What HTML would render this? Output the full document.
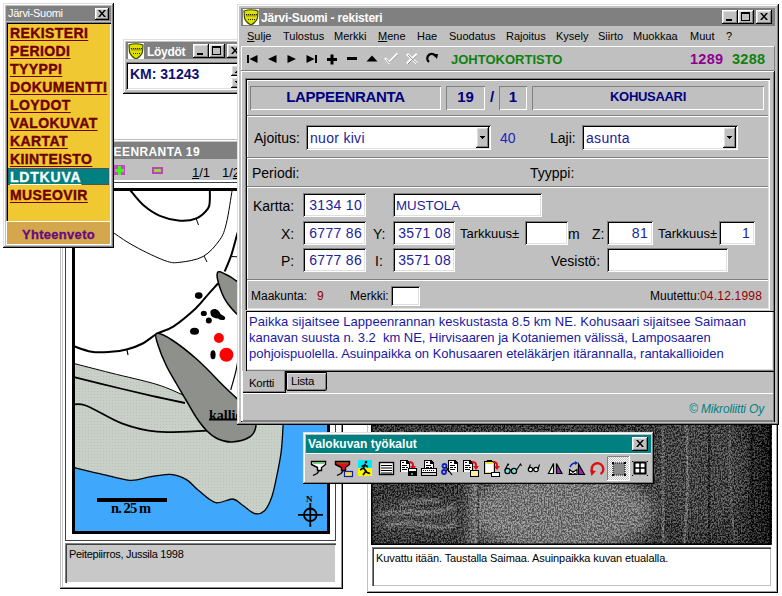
<!DOCTYPE html>
<html><head><meta charset="utf-8">
<style>
*{margin:0;padding:0;box-sizing:border-box}
html,body{width:782px;height:596px;overflow:hidden;background:#fff;font-family:"Liberation Sans",sans-serif;font-size:11px;color:#000}
.a{position:absolute}
.win{position:absolute;background:#c0c0c0;box-shadow:inset -1px -1px #000,inset 1px 1px #dfdfdf,inset -2px -2px #808080,inset 2px 2px #fff}
.tb{position:absolute;background:#808080;color:#fff;font-weight:bold;font-size:12px;white-space:nowrap;overflow:hidden}
.btn{position:absolute;background:#c0c0c0;box-shadow:inset -1px -1px #000,inset 1px 1px #fff,inset -2px -2px #808080,inset 2px 2px #dfdfdf}
.sunk{position:absolute;background:#fff;box-shadow:inset 1px 1px #808080,inset -1px -1px #fff,inset 2px 2px #000,inset -2px -2px #dfdfdf}
.sunk1{position:absolute;box-shadow:inset 1px 1px #808080,inset -1px -1px #fff}
.rais1{position:absolute;box-shadow:inset -1px -1px #808080,inset 1px 1px #fff}
.t{position:absolute;white-space:nowrap;line-height:1}
</style></head><body>

<!-- MAP WINDOW -->
<div class="a" style="left:60px;top:139px;width:283px;height:450px;background:#fff;box-shadow:inset -1px -1px #000,inset 1px 1px #c0c0c0,inset -2px -2px #909090,inset 2px 2px #fff,inset 3px 3px #c8c8c8"></div>
<div class="a" style="left:63px;top:159px;width:277px;height:21px;background:#c0c0c0"></div>
<div class="tb" style="left:63px;top:142px;width:277px;height:17px"></div>
<div class="t" style="left:80px;top:146px;color:#fff;font-weight:bold;font-size:12px;letter-spacing:0.4px">LAPPEENRANTA 19</div>
<svg class="a" style="left:114px;top:165px" width="12" height="11"><rect x="0" y="0" width="11" height="10" fill="#cc44cc"/><path d="M4 1h3v3h3v3h-3v3h-3v-3h-3v-3h3z" fill="#44ee22"/></svg>
<div class="a" style="left:152px;top:167px;width:11px;height:7px;background:#90e030;border:2px solid #c040c0"></div>
<div class="t" style="left:192px;top:166px;font-size:13px"><u>1</u>/1</div>
<div class="t" style="left:222px;top:166px;font-size:13px">1/<u>2</u></div>
<div class="a" style="left:65px;top:182px;width:271px;height:359px;background:#fff;border:1px solid #404040;box-shadow:inset 0 -1px #fff"></div>
<div class="a" style="left:65px;top:543px;width:271px;height:40px;background:#c8c8c8;box-shadow:inset 1px 1px #808080,inset 2px 2px #404040,inset -1px -1px #fff"></div>
<div class="t" style="left:69px;top:549px;font-size:11px;letter-spacing:-0.3px">Peitepiirros, Jussila 1998</div>
<svg class="a" style="left:72px;top:188px" width="258" height="346" viewBox="72 188 258 346">
 <defs>
  <pattern id="dots" width="3" height="3" patternUnits="userSpaceOnUse"><rect width="3" height="3" fill="#c8d0c8"/><rect x="1" y="1" width="1" height="1" fill="#b8c0b8"/></pattern>
 </defs>
 <rect x="72" y="188" width="258" height="346" fill="#fff"/>
 <path d="M72.0 363.0 C78.5 364.7 96.8 369.4 111.0 373.0 C125.2 376.6 145.0 380.8 157.0 384.5 C169.0 388.2 178.7 393.2 183.0 395.0 L237 400 L285 400 L284 400 L284.0 400.0 C283.9 404.1 283.6 416.3 283.1 424.9 C282.6 433.5 282.3 442.7 281.2 451.6 C280.1 460.5 277.9 470.6 276.3 478.3 C274.7 486.0 273.5 492.2 271.5 497.7 C269.5 503.1 267.0 508.4 264.2 511.0 C261.4 513.6 258.1 514.5 254.5 513.5 C250.8 512.5 246.0 507.4 242.3 505.0 C238.7 502.6 237.1 499.4 232.6 499.0 C228.1 498.6 221.3 504.0 215.6 502.6 C209.9 501.2 203.5 494.4 198.6 490.5 C193.7 486.6 190.8 482.1 186.0 479.4 C181.2 476.7 176.0 474.8 170.0 474.4 C164.0 474.0 156.7 475.9 150.0 476.9 C143.3 477.9 138.2 480.9 129.8 480.3 C121.4 479.8 109.2 475.8 99.6 473.6 C90.0 471.4 76.6 468.1 72.0 467.0 Z" fill="url(#dots)"/>
 <path d="M72.0 467.0 C76.6 468.1 90.0 471.4 99.6 473.6 C109.2 475.8 121.4 479.8 129.8 480.3 C138.2 480.9 143.3 477.9 150.0 476.9 C156.7 475.9 164.0 474.0 170.0 474.4 C176.0 474.8 181.2 476.7 186.0 479.4 C190.8 482.1 193.7 486.6 198.6 490.5 C203.5 494.4 209.9 501.2 215.6 502.6 C221.3 504.0 228.1 498.6 232.6 499.0 C237.1 499.4 238.7 502.6 242.3 505.0 C246.0 507.4 250.8 512.5 254.5 513.5 C258.1 514.5 261.4 513.6 264.2 511.0 C267.0 508.4 269.5 503.1 271.5 497.7 C273.5 492.2 274.7 486.0 276.3 478.3 C277.9 470.6 280.1 460.5 281.2 451.6 C282.3 442.7 282.6 433.5 283.1 424.9 C283.6 416.3 283.9 404.1 284.0 400.0 L285 400 L330 400 L330 534 L72 534 Z" fill="#40a8fc"/>
 <path d="M72.0 467.0 C76.6 468.1 90.0 471.4 99.6 473.6 C109.2 475.8 121.4 479.8 129.8 480.3 C138.2 480.9 143.3 477.9 150.0 476.9 C156.7 475.9 164.0 474.0 170.0 474.4 C176.0 474.8 181.2 476.7 186.0 479.4 C190.8 482.1 193.7 486.6 198.6 490.5 C203.5 494.4 209.9 501.2 215.6 502.6 C221.3 504.0 228.1 498.6 232.6 499.0 C237.1 499.4 238.7 502.6 242.3 505.0 C246.0 507.4 250.8 512.5 254.5 513.5 C258.1 514.5 261.4 513.6 264.2 511.0 C267.0 508.4 269.5 503.1 271.5 497.7 C273.5 492.2 274.7 486.0 276.3 478.3 C277.9 470.6 280.1 460.5 281.2 451.6 C282.3 442.7 282.6 433.5 283.1 424.9 C283.6 416.3 283.9 404.1 284.0 400.0" fill="none" stroke="#000" stroke-width="1.3"/>
 <path d="M72.0 363.0 C78.5 364.7 96.8 369.4 111.0 373.0 C125.2 376.6 145.0 380.8 157.0 384.5 C169.0 388.2 178.7 393.2 183.0 395.0" fill="none" stroke="#000" stroke-width="1"/>
 <path d="M72.0 376.5 C80.4 378.6 108.3 385.6 122.5 389.0 C136.7 392.4 146.6 394.7 157.0 397.0 C167.4 399.3 180.3 402.0 185.0 403.0" fill="none" stroke="#000" stroke-width="1.8"/>
 <path d="M70.0 405.0 C72.6 405.1 77.0 402.4 85.7 405.5 C94.5 408.6 110.6 419.3 122.5 423.7 C134.4 428.1 142.9 430.5 157.0 431.7 C171.1 432.9 198.7 430.8 207.0 430.6" fill="none" stroke="#000" stroke-width="1.8"/>
 <path d="M130.0 190.0 C132.2 192.5 138.2 200.7 143.2 205.0 C148.2 209.3 153.8 213.2 159.9 215.8 C166.0 218.4 173.7 220.3 179.8 220.7 C185.9 221.1 191.7 220.4 196.4 218.3 C201.1 216.2 205.9 211.4 208.1 208.3 C210.3 205.2 209.5 203.1 209.8 200.0 C210.1 196.9 209.8 191.7 209.8 190.0" fill="none" stroke="#000" stroke-width="2"/>
 <path d="M196 218 L198.5 225" stroke="#000" stroke-width="1"/>
 <path d="M100.0 222.0 C102.4 223.9 108.4 229.1 114.2 233.2 C120.0 237.3 126.5 241.9 135.0 246.5 C143.4 251.1 157.4 258.0 164.9 260.6 C172.4 263.2 173.4 263.0 179.8 262.3 C186.2 261.6 196.4 260.2 203.1 256.5 C209.8 252.8 215.8 245.5 219.7 239.9 C223.6 234.3 224.3 231.5 226.4 223.2 C228.5 214.9 231.2 195.5 232.2 190.0" fill="none" stroke="#000" stroke-width="1"/>
 <path d="M204 256 L207 262" stroke="#000" stroke-width="1"/>
 <path d="M240.0 226.0 C239.5 227.5 238.4 230.1 237.0 234.9 C235.6 239.7 233.5 248.7 231.4 254.8 C229.3 260.9 225.8 268.7 224.7 271.5" fill="none" stroke="#000" stroke-width="2"/>
 <path d="M232 256.5 L240 257" stroke="#000" stroke-width="1"/>
 <path d="M72.0 345.5 C75.3 346.6 85.1 350.8 91.6 351.8 C98.1 352.9 104.8 352.2 110.8 351.8 C116.8 351.4 122.1 350.6 127.4 349.2 C132.7 347.8 137.8 346.1 142.7 343.5 C147.6 340.9 151.7 336.8 156.8 333.9 C162.0 331.0 167.2 330.5 173.6 326.3 C180.0 322.1 189.5 314.1 195.4 308.7 C201.3 303.2 205.0 297.8 208.8 293.6 C212.6 289.4 216.5 285.2 218.0 283.5" fill="none" stroke="#000" stroke-width="2"/>
 <path d="M127 350 L128 355" stroke="#000" stroke-width="1.2"/>
 <path d="M217.5 272.5 C218.5 270.2 223.1 273.2 226.0 274.5 C228.9 275.8 232.3 277.8 235.0 280.0 C237.7 282.2 240.8 282.0 242.0 288.0 C243.2 294.0 244.3 313.3 242.0 316.0 C239.7 318.7 231.7 308.7 228.0 304.0 C224.3 299.3 221.8 293.2 220.0 288.0 C218.2 282.8 216.5 274.8 217.5 272.5 Z" fill="#8e908c" stroke="#000" stroke-width="1.5"/>
 <path d="M230.7 390.0 C231.7 386.4 234.8 376.7 236.5 368.4 C238.2 360.1 240.2 344.7 241.0 340.0" fill="none" stroke="#000" stroke-width="1.2"/>
 <path d="M156.5 333.5 C154.2 334.3 156.4 339.8 158.0 345.0 C159.6 350.2 163.0 358.7 166.0 365.0 C169.0 371.3 172.7 377.2 176.0 383.0 C179.3 388.8 182.7 394.3 186.0 400.0 C189.3 405.7 192.5 411.8 196.0 417.0 C199.5 422.2 203.3 427.3 207.0 431.0 C210.7 434.7 213.8 437.2 218.0 439.0 C222.2 440.8 226.7 442.3 232.0 442.0 C237.3 441.7 245.7 439.4 249.6 437.0 C253.5 434.6 255.0 431.0 255.7 427.3 C256.4 423.6 257.1 419.8 254.0 415.0 C250.9 410.2 241.9 403.3 237.0 398.6 C232.1 393.9 231.3 393.5 224.7 387.0 C218.1 380.5 206.2 367.6 197.4 359.8 C188.6 352.0 178.8 344.4 172.0 340.0 C165.2 335.6 158.8 332.7 156.5 333.5 Z" fill="#8e908c" stroke="#000" stroke-width="1.5"/>
 <g fill="#000">
  <ellipse cx="198.7" cy="295.6" rx="3.8" ry="3.3"/>
  <ellipse cx="203.8" cy="313.4" rx="3" ry="2.6"/>
  <path d="M210.5 311 Q212 308.5 215.5 309 Q219 310 220.5 314 L224.5 316.5 Q226 318.5 224 320 Q220 320.5 218 318.5 Q213 318 211 315.5 Q210 313 210.5 311 Z"/>
  <ellipse cx="208.8" cy="320.4" rx="3" ry="3"/>
  <ellipse cx="194.5" cy="331.3" rx="4.5" ry="3.5"/>
  <ellipse cx="213" cy="354.8" rx="2.6" ry="4.5"/>
 </g>
 <circle cx="218.9" cy="338" r="5" fill="#f00"/>
 <circle cx="226.4" cy="354.8" r="7" fill="#f00"/>
 <text x="209" y="419.5" font-family="Liberation Serif" font-weight="bold" font-size="14" fill="#000">kallio</text><rect x="209" y="418.5" width="30" height="2" fill="#000"/>
 <rect x="97" y="498" width="70" height="4" fill="#000"/>
 <text x="111" y="513.5" font-family="Liberation Serif" font-weight="bold" font-size="14.5" fill="#000" letter-spacing="-0.9" transform="translate(111 513.5) scale(1 1.05) translate(-111 -513.5)">n. 25 m</text>
 <circle cx="310.3" cy="514.8" r="6.3" fill="none" stroke="#000" stroke-width="1.8"/>
 <path d="M298 514.8 H323 M310.3 503 V527" stroke="#000" stroke-width="1.8"/>
 <text x="306" y="502" font-family="Liberation Serif" font-weight="bold" font-size="9" fill="#000">N</text>
 <rect x="73.5" y="189.5" width="255" height="343" fill="none" stroke="#000" stroke-width="3"/>
</svg>

<!-- PHOTO WINDOW -->
<div class="a" style="left:367px;top:380px;width:411px;height:213px;background:#fff;box-shadow:inset -1px -1px #000,inset 1px 1px #c0c0c0,inset -2px -2px #a0a0a0"></div>
<svg class="a" style="left:371px;top:400px" width="401" height="145" viewBox="371 400 401 145">
 <defs>
  <filter id="nz" x="0" y="0" width="100%" height="100%" color-interpolation-filters="sRGB">
   <feTurbulence type="fractalNoise" baseFrequency="0.7 0.55" numOctaves="3" seed="11" result="n"/>
   <feColorMatrix in="n" type="matrix" values="3.2 0 0 0 -1.1  3.2 0 0 0 -1.1  3.2 0 0 0 -1.1  0 0 0 0 1" result="g"/>
   <feComposite in="SourceGraphic" in2="g" operator="arithmetic" k1="0" k2="1" k3="0.34" k4="-0.17"/>
  </filter>
  <filter id="bl" x="-50%" y="-50%" width="200%" height="200%"><feGaussianBlur stdDeviation="8"/></filter>
  <filter id="bl2" x="-50%" y="-50%" width="200%" height="200%"><feGaussianBlur stdDeviation="1.5"/></filter>
  <linearGradient id="pg" x1="371" x2="771" y1="0" y2="0" gradientUnits="userSpaceOnUse">
   <stop offset="0" stop-color="#383838"/><stop offset="0.7" stop-color="#3a3a3a"/><stop offset="0.93" stop-color="#323232"/><stop offset="1" stop-color="#141414"/>
  </linearGradient>
  <linearGradient id="trk" x1="0" x2="1" y1="0" y2="0"><stop offset="0" stop-color="#3a3a3a"/><stop offset="0.5" stop-color="#555"/><stop offset="0.85" stop-color="#7a7a7a"/><stop offset="1" stop-color="#444"/></linearGradient>
 </defs>
 <g filter="url(#nz)">
  <rect x="371" y="400" width="401" height="145" fill="url(#pg)"/>
  <g filter="url(#bl)">
   <ellipse cx="560" cy="512" rx="95" ry="42" fill="#787878"/>
   <ellipse cx="420" cy="518" rx="50" ry="14" fill="#505050"/>
   <ellipse cx="700" cy="470" rx="45" ry="60" fill="#454545"/>
  </g>
  <g filter="url(#bl2)" stroke="#8a8a8a" stroke-width="3" fill="none" opacity="0.8">
   <path d="M380 515 Q400 510 420 512 T455 505"/>
   <path d="M385 525 Q410 522 430 526 T456 522"/>
   <path d="M400 505 Q420 498 440 502"/>
   <path d="M490 530 Q510 520 530 525"/>
  </g>
  <g stroke-width="1.5" fill="none">
   <path d="M663 424 V545" stroke="#6a6a6a" opacity="0.8" stroke-width="2.5"/>
   <path d="M686 424 Q690 480 684 545" stroke="#707070" opacity="0.8" stroke-width="2.5"/>
   <path d="M709 424 V545" stroke="#151515" opacity="0.8"/>
   <path d="M730 424 Q728 480 735 545" stroke="#606060" opacity="0.8" stroke-width="2"/>
   <path d="M752 424 V545" stroke="#151515" opacity="0.8" stroke-width="3"/>
  </g>
  <rect x="457" y="470" width="22" height="75" fill="url(#trk)" opacity="0.9"/>
 </g>
 <rect x="371.75" y="400" width="398.5" height="144.25" fill="none" stroke="#000" stroke-width="1.5"/>
</svg>
<div class="a" style="left:372px;top:547px;width:399px;height:39px;background:#fff;box-shadow:inset 1px 1px #808080,inset 2px 2px #404040,inset -1px -1px #c0c0c0"></div>
<div class="t" style="left:376px;top:553px;font-size:11px;letter-spacing:-0.1px">Kuvattu itään. Taustalla Saimaa. Asuinpaikka kuvan etualalla.</div>

<!-- LOYDOT WINDOW -->
<div class="win" style="left:123px;top:39px;width:130px;height:55px"></div>
<div class="tb" style="left:126px;top:42px;width:124px;height:17px"></div>
<svg class="a" style="left:128px;top:43px" width="16" height="16" viewBox="0 0 16 16"><rect width="16" height="16" fill="#fff"/><path d="M1 2 Q8 -0.5 15 2 L14.5 9 Q13 13.5 8 16 Q3 13.5 1.5 9 Z" fill="#e0e000" stroke="#3a4a00" stroke-width="1.2"/><g fill="#202000"><rect x="3" y="5" width="1.2" height="1.2"/><rect x="5" y="5" width="1.2" height="1.2"/><rect x="7" y="5" width="1.2" height="1.2"/><rect x="9" y="5" width="1.2" height="1.2"/><rect x="11" y="5" width="1.2" height="1.2"/><rect x="13" y="5" width="1" height="1.2"/><rect x="3" y="6.5" width="10.5" height="0.8" fill="#707000"/><rect x="5" y="10" width="1" height="1"/><rect x="7" y="10" width="1" height="1"/><rect x="9" y="10" width="1" height="1"/><rect x="11" y="10" width="1" height="1"/></g></svg>
<div class="t" style="left:147px;top:46px;color:#fff;font-weight:bold;font-size:12px;letter-spacing:-0.3px">Löydöt</div>
<div class="btn" style="left:193px;top:44px;width:16px;height:14px"><div class="a" style="left:4px;top:9px;width:6px;height:2px;background:#000"></div></div>
<div class="btn" style="left:209px;top:44px;width:16px;height:14px"><div class="a" style="left:3px;top:2px;width:9px;height:9px;border:1px solid #000;border-top-width:2px"></div></div>
<div class="btn" style="left:227px;top:44px;width:16px;height:14px"><svg class="a" style="left:4px;top:3px" width="8" height="7"><path d="M0 0h2l2 2.5 2-2.5h2l-3 3.5 3 3.5h-2l-2-2.5-2 2.5h-2l3-3.5z" fill="#000"/></svg></div>
<div class="sunk" style="left:126px;top:62px;width:124px;height:28px"></div>
<div class="btn" style="left:231px;top:65px;width:16px;height:11px"><svg class="a" style="left:4px;top:4px" width="7" height="4" shape-rendering="crispEdges"><path d="M3 0h1v1h1v1h1v1h1v1h-7v-1h1v-1h1v-1h1z" fill="#000"/></svg></div>
<div class="btn" style="left:231px;top:77px;width:16px;height:11px"><svg class="a" style="left:4px;top:4px" width="7" height="4" shape-rendering="crispEdges"><path d="M0 0h7v1h-1v1h-1v1h-1v1h-1v-1h-1v-1h-1v-1h-1z" fill="#000"/></svg></div>
<div class="t" style="left:130px;top:67px;font-weight:bold;font-size:14px;color:#101070">KM: 31243</div>

<!-- MAIN WINDOW -->
<div class="win" style="left:237px;top:4px;width:542px;height:421px"></div>
<div class="tb" style="left:241px;top:8px;width:534px;height:18px"></div>
<svg class="a" style="left:243px;top:9px" width="16" height="16" viewBox="0 0 16 16"><rect width="16" height="16" fill="#fff"/><path d="M1 2 Q8 -0.5 15 2 L14.5 9 Q13 13.5 8 16 Q3 13.5 1.5 9 Z" fill="#e0e000" stroke="#3a4a00" stroke-width="1.2"/><g fill="#202000"><rect x="3" y="5" width="1.2" height="1.2"/><rect x="5" y="5" width="1.2" height="1.2"/><rect x="7" y="5" width="1.2" height="1.2"/><rect x="9" y="5" width="1.2" height="1.2"/><rect x="11" y="5" width="1.2" height="1.2"/><rect x="13" y="5" width="1" height="1.2"/><rect x="3" y="6.5" width="10.5" height="0.8" fill="#707000"/><rect x="5" y="10" width="1" height="1"/><rect x="7" y="10" width="1" height="1"/><rect x="9" y="10" width="1" height="1"/><rect x="11" y="10" width="1" height="1"/></g></svg>
<div class="t" style="left:261px;top:12px;color:#fff;font-weight:bold;font-size:12px;letter-spacing:-0.2px">Järvi-Suomi - rekisteri</div>
<div class="btn" style="left:722px;top:10px;width:16px;height:14px"><div class="a" style="left:4px;top:9px;width:6px;height:2px;background:#000"></div></div>
<div class="btn" style="left:738px;top:10px;width:16px;height:14px"><div class="a" style="left:3px;top:2px;width:9px;height:9px;border:1px solid #000;border-top-width:2px"></div></div>
<div class="btn" style="left:756px;top:10px;width:16px;height:14px"><svg class="a" style="left:4px;top:3px" width="8" height="7"><path d="M0 0h2l2 2.5 2-2.5h2l-3 3.5 3 3.5h-2l-2-2.5-2 2.5h-2l3-3.5z" fill="#000"/></svg></div>
<!-- menu -->
<div class="t" style="top:31px;left:247px;font-size:11px"><u>S</u>ulje</div>
<div class="t" style="top:31px;left:283px;font-size:11px">Tulostus</div>
<div class="t" style="top:31px;left:334px;font-size:11px">Merkki</div>
<div class="t" style="top:31px;left:378px;font-size:11px"><u>M</u>ene</div>
<div class="t" style="top:31px;left:417px;font-size:11px">Hae</div>
<div class="t" style="top:31px;left:449px;font-size:11px">Suodatus</div>
<div class="t" style="top:31px;left:506px;font-size:11px">Rajoitus</div>
<div class="t" style="top:31px;left:556px;font-size:11px">Kysely</div>
<div class="t" style="top:31px;left:598px;font-size:11px">Siirto</div>
<div class="t" style="top:31px;left:633px;font-size:11px">Muokkaa</div>
<div class="t" style="top:31px;left:690px;font-size:11px">Muut</div>
<div class="t" style="top:31px;left:726px;font-size:11px">?</div>
<!-- toolbar -->
<div class="rais1" style="left:241px;top:46px;width:534px;height:25px"></div>
<svg class="a" style="left:241px;top:46px" width="220" height="25" viewBox="241 46 220 25">
 <rect x="247" y="55" width="2" height="8" fill="#000"/><path d="M249.5 59 L257.5 55 V63 Z" fill="#000"/>
 <path d="M268 59 L276.5 55 V63 Z" fill="#000"/>
 <path d="M287.5 55 L296 59 L287.5 63 Z" fill="#000"/>
 <path d="M306.5 55 L314.5 59 L306.5 63 Z" fill="#000"/><rect x="315" y="55" width="2" height="8" fill="#000"/>
 <path d="M330.5 54.5h3v3.5h3.5v3h-3.5v3.5h-3v-3.5h-3.5v-3h3.5z" fill="#000"/>
 <rect x="347" y="57" width="10" height="3" fill="#000"/>
 <path d="M366.5 61.5 L372 55.5 L377.5 61.5 Z" fill="#000"/>
 <path d="M385 58 L389 62.5 L397.5 53.5" stroke="#fff" stroke-width="2.4" fill="none"/><path d="M386.5 59.5 L389.5 63 L398 54.5" stroke="#8a8a8a" stroke-width="1" fill="none"/>
 <path d="M407 54 L417 63.5 M417 54 L407 63.5" stroke="#fff" stroke-width="2.6" fill="none"/><path d="M408 55 L417.5 64 M417.5 55 L408 64" stroke="#8a8a8a" stroke-width="1" fill="none"/>
 <path d="M429 62 A4.5 4.5 0 1 1 436 57" stroke="#000" stroke-width="2.2" fill="none"/><path d="M433 54 L438 54 L437 59 Z" fill="#000"/>
</svg>
<div class="t" style="left:451px;top:53px;font-weight:bold;font-size:13px;color:#108010">JOHTOKORTISTO</div>
<div class="t" style="left:690px;top:52px;font-weight:bold;font-size:14.5px;color:#900090;letter-spacing:0.3px">1289</div>
<div class="t" style="left:732px;top:52px;font-weight:bold;font-size:14.5px;color:#108010;letter-spacing:0.3px">3288</div>
<!-- lower panel -->
<div class="a" style="left:241px;top:71px;width:534px;height:351px;box-shadow:inset -1px -1px #000,inset 1px 1px #fff,inset -2px -2px #808080"></div>
<!-- content frame -->
<div class="a" style="left:245px;top:78px;width:525px;height:232px;box-shadow:inset 1px 1px #808080,inset 2px 2px #000,inset 3px 3px #fff,inset -1px -1px #fff,inset -2px -2px #dfdfdf"></div>
<!-- separators -->
<div class="a" style="left:247px;top:115px;width:521px;height:1px;background:#808080;box-shadow:0 1px #fff"></div>
<div class="a" style="left:247px;top:157px;width:521px;height:1px;background:#808080;box-shadow:0 1px #fff"></div>
<div class="a" style="left:247px;top:186px;width:521px;height:1px;background:#808080;box-shadow:0 1px #fff"></div>
<div class="a" style="left:247px;top:279px;width:521px;height:1px;background:#808080;box-shadow:0 1px #fff"></div>
<!-- header boxes -->
<div class="sunk1" style="left:250px;top:86px;width:191px;height:24px"></div>
<div class="t" style="left:250px;width:191px;text-align:center;top:89px;font-weight:bold;font-size:15px;color:#000080;letter-spacing:-0.3px">LAPPEENRANTA</div>
<div class="sunk1" style="left:446px;top:86px;width:39px;height:24px"></div>
<div class="t" style="left:446px;width:39px;text-align:center;top:89px;font-weight:bold;font-size:15px;color:#000080">19</div>
<div class="t" style="left:490px;top:89px;font-weight:bold;font-size:15px;color:#000080">/</div>
<div class="sunk1" style="left:499px;top:86px;width:28px;height:24px"></div>
<div class="t" style="left:499px;width:28px;text-align:center;top:89px;font-weight:bold;font-size:15px;color:#000080">1</div>
<div class="sunk1" style="left:532px;top:86px;width:232px;height:24px"></div>
<div class="t" style="left:532px;width:232px;text-align:center;top:90px;font-weight:bold;font-size:13px;color:#000080;letter-spacing:-0.3px">KOHUSAARI</div>
<!-- Ajoitus row -->
<div class="t" style="left:254px;top:131px;font-size:14px">Ajoitus:</div>
<div class="sunk" style="left:306px;top:125px;width:185px;height:25px"></div>
<div class="t" style="left:310px;top:131px;font-size:14px;color:#22229a;letter-spacing:0.3px">nuor kivi</div>
<div class="btn" style="left:476px;top:127px;width:13px;height:21px"><svg class="a" style="left:4px;top:9px" width="5" height="3" shape-rendering="crispEdges"><path d="M0 0h5v1h-1v1h-1v1h-1v-1h-1v-1h-1z" fill="#000"/></svg></div>
<div class="t" style="left:500px;top:131px;font-size:14px;color:#2020c0">40</div>
<div class="t" style="left:550px;top:131px;font-size:14px">Laji:</div>
<div class="sunk" style="left:582px;top:125px;width:156px;height:25px"></div>
<div class="t" style="left:586px;top:131px;font-size:14px;color:#22229a;letter-spacing:0.3px">asunta</div>
<div class="btn" style="left:723px;top:127px;width:13px;height:21px"><svg class="a" style="left:4px;top:9px" width="5" height="3" shape-rendering="crispEdges"><path d="M0 0h5v1h-1v1h-1v1h-1v-1h-1v-1h-1z" fill="#000"/></svg></div>
<!-- Periodi row -->
<div class="t" style="left:252px;top:166px;font-size:14px">Periodi:</div>
<div class="t" style="left:530px;top:166px;font-size:14px">Tyyppi:</div>
<!-- Kartta block -->
<div class="t" style="left:253px;top:199px;font-size:14px">Kartta:</div>
<div class="sunk" style="left:303px;top:193px;width:63px;height:24px"></div>
<div class="t" style="left:303px;width:59px;text-align:right;top:198px;font-size:14px;color:#22229a;letter-spacing:0.3px">3134 10</div>
<div class="sunk" style="left:393px;top:193px;width:149px;height:24px"></div>
<div class="t" style="left:396px;top:199px;font-size:13.3px;color:#22229a;letter-spacing:0px">MUSTOLA</div>
<div class="t" style="left:281px;top:227px;font-size:14px">X:</div>
<div class="sunk" style="left:303px;top:221px;width:63px;height:24px"></div>
<div class="t" style="left:303px;width:59px;text-align:right;top:226px;font-size:14px;color:#22229a;letter-spacing:0.3px">6777 86</div>
<div class="t" style="left:373px;top:227px;font-size:14px">Y:</div>
<div class="sunk" style="left:393px;top:221px;width:62px;height:24px"></div>
<div class="t" style="left:393px;width:58px;text-align:right;top:226px;font-size:14px;color:#22229a;letter-spacing:0.3px">3571 08</div>
<div class="t" style="left:460px;top:227px;font-size:13px">Tarkkuus±</div>
<div class="sunk" style="left:525px;top:221px;width:43px;height:24px"></div>
<div class="t" style="left:568px;top:227px;font-size:14px">m</div>
<div class="t" style="left:592px;top:227px;font-size:14px">Z:</div>
<div class="sunk" style="left:607px;top:221px;width:46px;height:24px"></div>
<div class="t" style="left:607px;width:41px;text-align:right;top:226px;font-size:14px;color:#22229a;letter-spacing:0.3px">81</div>
<div class="t" style="left:658px;top:227px;font-size:13px">Tarkkuus±</div>
<div class="sunk" style="left:719px;top:221px;width:36px;height:24px"></div>
<div class="t" style="left:719px;width:31px;text-align:right;top:226px;font-size:14px;color:#22229a;letter-spacing:0.3px">1</div>
<div class="t" style="left:281px;top:254px;font-size:14px">P:</div>
<div class="sunk" style="left:303px;top:248px;width:63px;height:24px"></div>
<div class="t" style="left:303px;width:59px;text-align:right;top:253px;font-size:14px;color:#22229a;letter-spacing:0.3px">6777 86</div>
<div class="t" style="left:375px;top:254px;font-size:14px">I:</div>
<div class="sunk" style="left:393px;top:248px;width:62px;height:24px"></div>
<div class="t" style="left:393px;width:58px;text-align:right;top:253px;font-size:14px;color:#22229a;letter-spacing:0.3px">3571 08</div>
<div class="t" style="left:551px;top:254px;font-size:14px">Vesistö:</div>
<div class="sunk" style="left:607px;top:248px;width:121px;height:24px"></div>
<!-- Maakunta row -->
<div class="t" style="left:251px;top:290px;font-size:12px">Maakunta:</div>
<div class="t" style="left:317px;top:290px;font-size:12px;color:#900000">9</div>
<div class="t" style="left:350px;top:290px;font-size:12px">Merkki:</div>
<div class="sunk" style="left:391px;top:286px;width:29px;height:20px"></div>
<div class="t" style="left:650px;top:290px;font-size:12px">Muutettu:</div>
<div class="t" style="left:700px;top:290px;font-size:12px;color:#900000;letter-spacing:0.2px">04.12.1998</div>
<!-- text box -->
<div class="a" style="left:246px;top:311px;width:529px;height:61px;background:#fff;box-shadow:inset 1px 1px #000,inset -1px -1px #000,inset -2px -2px #808080,inset -3px -3px #dfdfdf"></div>
<div class="t" style="left:249px;top:314px;font-size:13px;line-height:16px;color:#1818a4;letter-spacing:0.06px">Paikka sijaitsee Lappeenrannan keskustasta 8.5 km NE. Kohusaari sijaitsee Saimaan</div>
<div class="t" style="left:249px;top:330px;font-size:13px;line-height:16px;color:#1818a4;letter-spacing:-0.02px">kanavan suusta n. 3.2&nbsp; km NE, Hirvisaaren ja Kotaniemen välissä, Lamposaaren</div>
<div class="t" style="left:249px;top:346px;font-size:13px;line-height:16px;color:#1818a4;letter-spacing:-0.02px">pohjoispuolella. Asuinpaikka on Kohusaaren eteläkärjen itärannalla, rantakallioiden</div>
<!-- tabs -->
<div class="a" style="left:242px;top:371px;width:44px;height:22px;background:#c0c0c0;box-shadow:inset 1px 0 #fff,inset -1px -1px #000,inset -2px -2px #808080"></div>
<div class="t" style="left:249px;top:378px;font-size:11.5px;letter-spacing:-0.3px">Kortti</div>
<div class="a" style="left:286px;top:372px;width:41px;height:19px;background:#c0c0c0;border:1px solid #000;border-radius:0 0 2px 2px;box-shadow:inset 1px 1px #dfdfdf,inset -1px -1px #808080"></div>
<div class="t" style="left:291px;top:376px;font-size:11.5px;letter-spacing:-0.2px">Lista</div>
<!-- status -->
<div class="rais1" style="left:242px;top:393px;width:532px;height:29px"></div>
<div class="t" style="left:689px;top:403px;font-size:12px;font-style:italic;color:#008080;letter-spacing:-0.15px">© Mikroliitti Oy</div>

<!-- PALETTE -->
<div class="win" style="left:3px;top:3px;width:111px;height:245px"></div>
<div class="tb" style="left:6px;top:6px;width:105px;height:15px"></div>
<div class="t" style="left:8px;top:8px;color:#fff;font-size:11px;letter-spacing:-0.3px">Järvi-Suomi</div>
<div class="btn" style="left:95px;top:8px;width:14px;height:12px"><svg class="a" style="left:3px;top:2px" width="8" height="7"><path d="M0 0h2l2 2.5 2-2.5h2l-3 3.5 3 3.5h-2l-2-2.5-2 2.5h-2l3-3.5z" fill="#000"/></svg></div>
<div class="a" style="left:6px;top:22px;width:105px;height:200px;background:#f0c832;box-shadow:inset 1px 1px #808080,inset 2px 2px #000,inset -1px -1px #fff"></div>
<div class="a" style="left:8px;top:168px;width:101px;height:17px;background:#008080;outline:1px dotted #4a4a4a;outline-offset:-1px"></div>
<div class="t" style="left:10px;top:26px;font-weight:bold;font-size:14px;letter-spacing:0.4px;color:#700000;-webkit-text-stroke:0.4px #700000;text-decoration:underline;text-decoration-thickness:1px;text-underline-offset:2px">REKISTERI</div>
<div class="t" style="left:10px;top:44px;font-weight:bold;font-size:14px;letter-spacing:0.4px;color:#700000;-webkit-text-stroke:0.4px #700000;text-decoration:underline;text-decoration-thickness:1px;text-underline-offset:2px">PERIODI</div>
<div class="t" style="left:10px;top:62px;font-weight:bold;font-size:14px;letter-spacing:0.4px;color:#700000;-webkit-text-stroke:0.4px #700000;text-decoration:underline;text-decoration-thickness:1px;text-underline-offset:2px">TYYPPI</div>
<div class="t" style="left:10px;top:80px;font-weight:bold;font-size:14px;letter-spacing:0.4px;color:#700000;-webkit-text-stroke:0.4px #700000;text-decoration:underline;text-decoration-thickness:1px;text-underline-offset:2px">DOKUMENTTI</div>
<div class="t" style="left:10px;top:98px;font-weight:bold;font-size:14px;letter-spacing:0.4px;color:#700000;-webkit-text-stroke:0.4px #700000;text-decoration:underline;text-decoration-thickness:1px;text-underline-offset:2px">LOYDOT</div>
<div class="t" style="left:10px;top:116px;font-weight:bold;font-size:14px;letter-spacing:0.4px;color:#700000;-webkit-text-stroke:0.4px #700000;text-decoration:underline;text-decoration-thickness:1px;text-underline-offset:2px">VALOKUVAT</div>
<div class="t" style="left:10px;top:134px;font-weight:bold;font-size:14px;letter-spacing:0.4px;color:#700000;-webkit-text-stroke:0.4px #700000;text-decoration:underline;text-decoration-thickness:1px;text-underline-offset:2px">KARTAT</div>
<div class="t" style="left:10px;top:152px;font-weight:bold;font-size:14px;letter-spacing:0.4px;color:#700000;-webkit-text-stroke:0.4px #700000;text-decoration:underline;text-decoration-thickness:1px;text-underline-offset:2px">KIINTEISTO</div>
<div class="t" style="left:10px;top:170px;font-weight:bold;font-size:14px;letter-spacing:0.8px;color:#fff;-webkit-text-stroke:0.3px #fff;text-decoration:underline;text-decoration-thickness:1px;text-underline-offset:2px">LDTKUVA</div>
<div class="t" style="left:10px;top:188px;font-weight:bold;font-size:14px;letter-spacing:0.4px;color:#700000;-webkit-text-stroke:0.4px #700000;text-decoration:underline;text-decoration-thickness:1px;text-underline-offset:2px">MUSEOVIR</div>
<div class="a" style="left:6px;top:221px;width:105px;height:24px;background:#d4a64e;box-shadow:inset 1px 1px #fff,inset -1px -1px #fff"></div>
<div class="t" style="left:6px;width:105px;text-align:center;top:228px;font-weight:bold;font-size:13px;color:#6a0a7a;-webkit-text-stroke:0.3px #6a0a7a;letter-spacing:0.3px">Yhteenveto</div>

<!-- TOOLBAR -->
<div class="win" style="left:303px;top:432px;width:351px;height:52px"></div>
<div class="tb" style="left:306px;top:435px;width:345px;height:18px;background:#008080"></div>
<div class="a" style="left:306px;top:453px;width:345px;height:1px;background:#fff"></div>
<div class="t" style="left:308px;top:438px;color:#fff;font-weight:bold;font-size:12px">Valokuvan työkalut</div>
<div class="btn" style="left:632px;top:437px;width:16px;height:14px"><svg class="a" style="left:4px;top:3px" width="8" height="7"><path d="M0 0h2l2 2.5 2-2.5h2l-3 3.5 3 3.5h-2l-2-2.5-2 2.5h-2l3-3.5z" fill="#000"/></svg></div>
<svg class="a" style="left:303px;top:452px" width="351" height="32" viewBox="303 452 351 32">
 <defs><pattern id="chk" width="2" height="2" patternUnits="userSpaceOnUse"><rect width="2" height="2" fill="#fff"/><rect width="1" height="1" fill="#c0c0c0"/><rect x="1" y="1" width="1" height="1" fill="#c0c0c0"/></pattern></defs>
 <!-- 1 white funnel -->
 <path d="M311.5 461.5 H325.5 V464.5 L321.5 467.5 V470.5 H317.5 V467.5 L311.5 464.5 Z" fill="#fff" stroke="#000" stroke-width="1.4"/>
 <rect x="313" y="462.5" width="11" height="1.2" fill="#30c030"/>
 <path d="M319 471 L317 473.5 L313 475.5" fill="none" stroke="#000" stroke-width="1.3"/>
 <!-- 2 red funnel -->
 <path d="M335.5 461.5 H349.5 V464.5 L345.5 467.5 V470.5 H341.5 V467.5 L335.5 464.5 Z" fill="#e01010" stroke="#000" stroke-width="1.4"/>
 <rect x="337" y="462.5" width="11" height="1.2" fill="#707020"/>
 <path d="M343 471 L341 473.5 L337 475.5" fill="none" stroke="#000" stroke-width="1.3"/>
 <rect x="344.5" y="471.5" width="8" height="5" fill="#f0e060" stroke="#1020a0" stroke-width="1.2"/>
 <!-- 3 runner -->
 <rect x="358" y="460" width="14" height="8" fill="#00e8f8"/><rect x="358" y="468" width="14" height="8" fill="#f8f800"/>
 <circle cx="366" cy="462" r="1.3" fill="#000"/>
 <path d="M365.5 463.5 L363.5 468 L360 470 M363.5 468 L366 471 L363 475 M363.5 468 L367 472.5 L370 473.5 M365 465 L368 467 M365 465 L361.5 466.5" fill="none" stroke="#000" stroke-width="1.6"/>
 <!-- 4 lines -->
 <rect x="379.5" y="462.5" width="14" height="12" fill="#fff" stroke="#000" stroke-width="1.4"/>
 <path d="M381 465.5 H392 M381 468 H392 M381 470.5 H392 M381 473 H392" stroke="#000" stroke-width="1"/>
 <!-- 5 doc + arrow + floppy -->
 <g shape-rendering="crispEdges"><path d="M400 460 h7 l3 3 v9 h-10 z" fill="#000"/><path d="M401 461 h5 v3 h3 v8 h-8 z" fill="#fff"/>
 <rect x="402" y="462" width="2" height="1" fill="#000"/><rect x="402" y="465" width="5" height="1" fill="#000"/><rect x="402" y="467" width="3" height="1" fill="#000"/><rect x="406" y="467" width="2" height="1" fill="#000"/><rect x="402" y="469" width="5" height="1" fill="#000"/></g>
 <path d="M409 461 Q414 461 414 465 V466 H416 L413 470 L410 466 H412 V465 Q412 463 409 463 Z" fill="#e01010"/>
 <g shape-rendering="crispEdges"><rect x="408" y="468" width="9" height="8" fill="#000"/><rect x="409" y="469" width="7" height="2" fill="#fff"/><rect x="411" y="473" width="2" height="2" fill="#808080"/></g>
 <!-- 6 printer -->
 <g shape-rendering="crispEdges"><path d="M424 460 h7 l3 3 v9 h-10 z" fill="#000"/><path d="M425 461 h5 v3 h3 v8 h-8 z" fill="#fff"/>
 <rect x="426" y="462" width="2" height="1" fill="#000"/><rect x="426" y="465" width="5" height="1" fill="#000"/><rect x="426" y="467" width="3" height="1" fill="#000"/><rect x="430" y="467" width="2" height="1" fill="#000"/><rect x="426" y="469" width="5" height="1" fill="#000"/></g>
 <g shape-rendering="crispEdges"><rect x="421" y="468" width="16" height="8" fill="#000"/><rect x="422" y="469" width="14" height="3" fill="#fff"/><rect x="422" y="473" width="14" height="2" fill="#d0d0d0"/>
 <rect x="423" y="470" width="1" height="1" fill="#000"/><rect x="425" y="470" width="1" height="1" fill="#000"/><rect x="427" y="470" width="1" height="1" fill="#000"/><rect x="429" y="470" width="1" height="1" fill="#000"/><rect x="431" y="470" width="1" height="1" fill="#000"/><rect x="433" y="470" width="1" height="1" fill="#000"/></g>
 <!-- 7 scissors + doc -->
 <g shape-rendering="crispEdges"><path d="M448 460 h7 l3 3 v9 h-10 z" fill="#000"/><path d="M449 461 h5 v3 h3 v8 h-8 z" fill="#fff"/>
 <rect x="450" y="462" width="2" height="1" fill="#000"/><rect x="450" y="465" width="5" height="1" fill="#000"/><rect x="450" y="467" width="3" height="1" fill="#000"/><rect x="454" y="467" width="2" height="1" fill="#000"/><rect x="450" y="469" width="5" height="1" fill="#000"/></g>
 <circle cx="444.5" cy="466" r="2" fill="none" stroke="#1020c0" stroke-width="1.8"/><circle cx="444" cy="472" r="2" fill="none" stroke="#1020c0" stroke-width="1.8"/>
 <path d="M446 467 L452 475 M446 471 L449 468" stroke="#000" stroke-width="1.2"/>
 <!-- 8 doc + arrow + yellow doc -->
 <g shape-rendering="crispEdges"><path d="M463 460 h7 l3 3 v9 h-10 z" fill="#000"/><path d="M464 461 h5 v3 h3 v8 h-8 z" fill="#fff"/>
 <rect x="465" y="462" width="2" height="1" fill="#000"/><rect x="465" y="465" width="5" height="1" fill="#000"/><rect x="465" y="467" width="3" height="1" fill="#000"/><rect x="469" y="467" width="2" height="1" fill="#000"/><rect x="465" y="469" width="5" height="1" fill="#000"/></g>
 <path d="M472 461 Q477 461 477 465 V466 H479 L476 470 L473 466 H475 V465 Q475 463 472 463 Z" fill="#e01010"/>
 <g shape-rendering="crispEdges"><rect x="470" y="470" width="9" height="7" fill="#000"/><rect x="471" y="471" width="7" height="5" fill="#f8f0a0"/></g>
 <!-- 9 clipboard -->
 <g shape-rendering="crispEdges"><rect x="484" y="461" width="11" height="13" fill="#000"/><rect x="485" y="462" width="9" height="11" fill="#f0e040"/><rect x="486" y="464" width="7" height="8" fill="#fff"/><rect x="487" y="460" width="5" height="2" fill="#000"/></g>
 <path d="M493 461 Q498 461 498 465 V466 H500 L497 470 L494 466 H496 V465 Q496 463 493 463 Z" fill="#e01010"/>
 <g shape-rendering="crispEdges"><rect x="491" y="472" width="9" height="5" fill="#000"/><rect x="492" y="473" width="7" height="3" fill="#fff"/></g>
 <!-- 10 glasses -->
 <circle cx="507.5" cy="471" r="2.6" fill="#80e0e0" stroke="#000" stroke-width="1.2"/><circle cx="514" cy="471" r="2.6" fill="#80e0e0" stroke="#000" stroke-width="1.2"/>
 <path d="M510 470 H511.5 M505 470 L508 464 L509 465 M516.5 470 L520.5 464 L521.5 466" fill="none" stroke="#000" stroke-width="1.1"/>
 <!-- 11 small glasses -->
 <circle cx="530.5" cy="469.5" r="2.2" fill="#fff" stroke="#000" stroke-width="1.2"/><circle cx="536" cy="469.5" r="2.2" fill="#fff" stroke="#000" stroke-width="1.2"/>
 <path d="M532.5 469 H534 M528.5 469 L530.5 464.5 M538 469 L539.5 464.5" fill="none" stroke="#000" stroke-width="1.1"/>
 <!-- 12 triangles -->
 <path d="M553.5 463.5 V473.5 H548.5 Z" fill="#fff" stroke="#000" stroke-width="1.2"/>
 <path d="M556.5 463.5 V473.5 H562 Z" fill="#a020c0" stroke="#000" stroke-width="1.2"/>
 <!-- 13 rotate triangles -->
 <path d="M569.5 469.5 L576 474.5 H569.5 Z M569.5 474.5 L577 469.5 V474.5 Z" fill="#fff" stroke="#000" stroke-width="1.1"/>
 <path d="M578.5 464 V474.5 H584.5 Z" fill="#a020c0" stroke="#000" stroke-width="1.2"/>
 <path d="M570 467 Q572 462.5 576 463" fill="none" stroke="#1020c0" stroke-width="1.6"/><path d="M575 461 L578 463 L575 465 Z" fill="#1020c0"/>
 <!-- 14 red circle arrow -->
 <path d="M592.5 472 A5.8 5.8 0 1 1 600.5 474" fill="none" stroke="#e01010" stroke-width="2.4"/>
 <path d="M590 470 L596 471 L591.5 476 Z" fill="#e01010"/>
 <!-- 15 pressed -->
 <rect x="607" y="456" width="22" height="24" fill="url(#chk)"/>
 <path d="M607.5 480 V456.5 H629" fill="none" stroke="#808080" stroke-width="1"/>
 <path d="M629.5 456 V480.5 H607" fill="none" stroke="#fff" stroke-width="1"/>
 <rect x="613" y="463" width="12" height="12" fill="#8a8a8a" stroke="#000" stroke-width="1" stroke-dasharray="1 1"/>
 <g fill="#000"><rect x="612" y="462" width="2" height="2"/><rect x="624" y="462" width="2" height="2"/><rect x="612" y="474" width="2" height="2"/><rect x="624" y="474" width="2" height="2"/></g>
 <!-- 16 grid -->
 <rect x="634.5" y="462.5" width="11" height="11" fill="#fff" stroke="#000" stroke-width="2"/>
 <path d="M640 462 V474 M634 468 H646" stroke="#000" stroke-width="1.5"/>
 <g fill="#000"><rect x="632" y="461" width="1" height="1"/><rect x="647" y="461" width="1" height="1"/><rect x="632" y="475" width="1" height="1"/><rect x="647" y="475" width="1" height="1"/></g>
</svg>

</body></html>
